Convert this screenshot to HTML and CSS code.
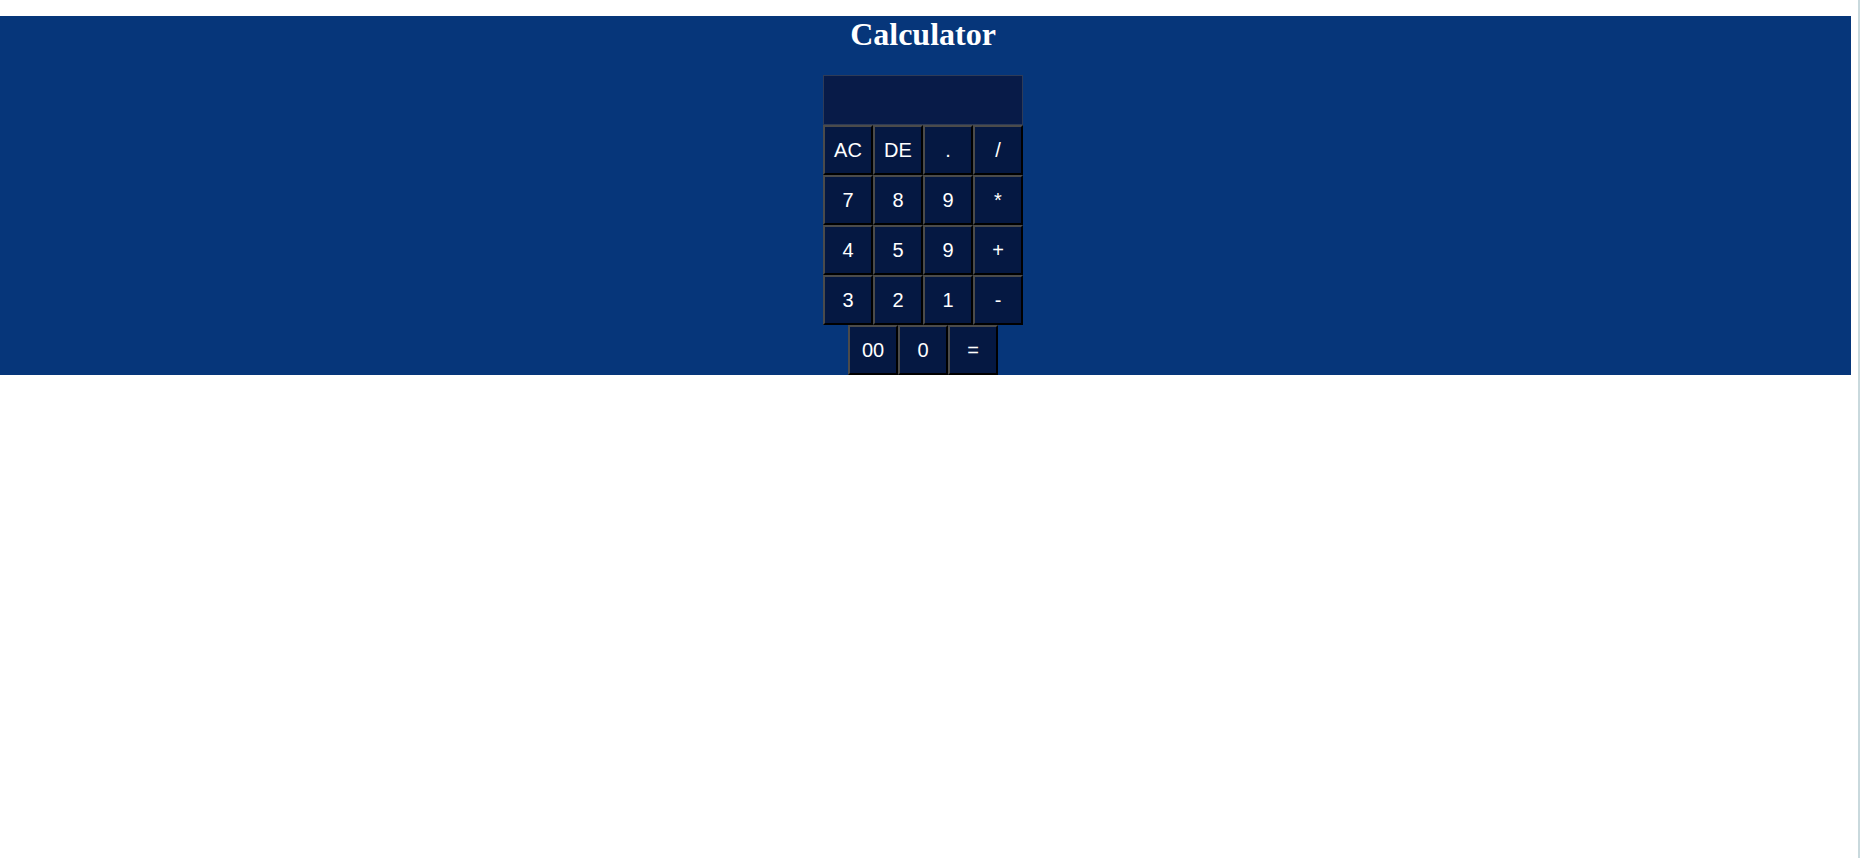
FILE: index.html
```html
<!DOCTYPE html>
<html>
<head>
<meta charset="utf-8">
<title>Calculator</title>
<link rel="stylesheet" href="styles.css">
</head>
<body>
<div class="page">
  <section class="app">
    <h1 class="title">Calculator</h1>
    <div class="calc">
      <div class="display"></div>
      <div class="keys">
        <button class="key">AC</button>
        <button class="key">DE</button>
        <button class="key">.</button>
        <button class="key">/</button>
        <button class="key">7</button>
        <button class="key">8</button>
        <button class="key">9</button>
        <button class="key">*</button>
        <button class="key">4</button>
        <button class="key">5</button>
        <button class="key">9</button>
        <button class="key">+</button>
        <button class="key">3</button>
        <button class="key">2</button>
        <button class="key">1</button>
        <button class="key">-</button>
      </div>
      <div class="last-row">
        <button class="key">00</button>
        <button class="key">0</button>
        <button class="key">=</button>
      </div>
    </div>
  </section>
  <div class="edge"></div>
</div>
</body>
</html>
```

FILE: styles.css
```css
html, body {
  margin: 0;
  padding: 0;
  background: #ffffff;
}

.page {
  display: flex;
  align-items: flex-start;
  min-height: 100vh;
}

.app {
  flex: 1;
  margin-top: 16px;
  margin-right: 7px;
  padding: 2px 5px 0 0;
  background: #06367a;
  display: flex;
  flex-direction: column;
  align-items: center;
}

.edge {
  width: 2px;
  align-self: stretch;
  background: #c9d9dd;
  margin-right: 1px;
}

.title {
  margin: 0;
  font-family: "Liberation Serif", "Times New Roman", serif;
  font-weight: bold;
  font-size: 32px;
  line-height: 32px;
  color: #ffffff;
}

.calc {
  margin-top: 25px;
  width: 200px;
  display: flex;
  flex-direction: column;
  align-items: center;
}

.display {
  box-sizing: border-box;
  width: 200px;
  height: 50px;
  background: #081b48;
  border: 1px solid #2e3b57;
}

.keys {
  display: grid;
  grid-template-columns: repeat(4, 50px);
  grid-auto-rows: 50px;
}

.last-row {
  display: flex;
}

.key {
  box-sizing: border-box;
  width: 50px;
  height: 50px;
  margin: 0;
  padding: 0;
  background: #051842;
  color: #ffffff;
  font-family: "Liberation Sans", Arial, sans-serif;
  font-size: 20px;
  border-style: solid;
  border-width: 2px;
  border-color: #4b4b4b #000000 #000000 #4b4b4b;
  display: flex;
  align-items: center;
  justify-content: center;
}
```
